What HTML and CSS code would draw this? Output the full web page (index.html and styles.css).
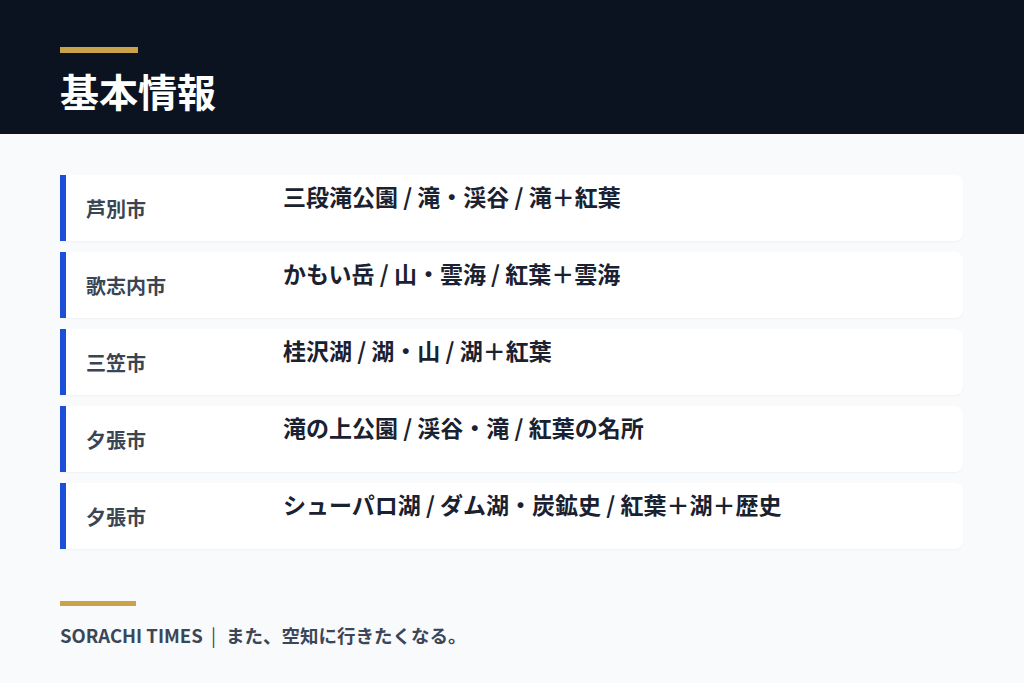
FILE: index.html
```html
<!DOCTYPE html>
<html lang="ja">
<head>
<meta charset="utf-8">
<link rel="stylesheet" href="styles.css">
</head>
<body>
<header class="hero">
  <div class="accent"></div>
  <h1 class="title">基本情報</h1>
</header>
<main class="list">
  <div class="row"><div class="city">芦別市</div><div class="spot">三段滝公園 / 滝・渓谷 / 滝＋紅葉</div></div>
  <div class="row"><div class="city">歌志内市</div><div class="spot">かもい岳 / 山・雲海 / 紅葉＋雲海</div></div>
  <div class="row"><div class="city">三笠市</div><div class="spot">桂沢湖 / 湖・山 / 湖＋紅葉</div></div>
  <div class="row"><div class="city">夕張市</div><div class="spot">滝の上公園 / 渓谷・滝 / 紅葉の名所</div></div>
  <div class="row"><div class="city">夕張市</div><div class="spot">シューパロ湖 / ダム湖・炭鉱史 / 紅葉＋湖＋歴史</div></div>
</main>
<footer class="foot">
  <div class="foot-accent"></div>
  <p class="brand">SORACHI TIMES <span class="sep">|</span> また、空知に行きたくなる。</p>
</footer>
</body>
</html>
```
FILE: styles.css
```css
html, body {
  margin: 0;
  padding: 0;
}
body {
  width: 1024px;
  height: 683px;
  overflow: hidden;
  background: #f8fafc;
  font-family: "Noto Sans CJK JP", "Noto Sans", sans-serif;
}
.hero {
  background: #0c1320;
  height: 134px;
  box-sizing: border-box;
  padding: 47px 60px 0;
}
.accent {
  width: 78px;
  height: 6px;
  background: #c9a24a;
}
.title {
  margin: 13px 0 0;
  color: #ffffff;
  font-size: 39px;
  font-weight: 700;
  line-height: 48px;
}
.list {
  padding: 41px 61px 0 60px;
  display: flex;
  flex-direction: column;
  gap: 11px;
}
.row {
  display: grid;
  grid-template-columns: 197px 1fr;
  height: 66px;
  box-sizing: border-box;
  padding: 0 20px;
  background: #ffffff;
  border-left: 6px solid #1d4ed8;
  border-radius: 0 8px 8px 0;
  box-shadow: 0 1px 2px rgba(15, 23, 42, 0.04);
}
.city {
  align-self: center;
  padding-top: 2px;
  font-size: 20px;
  font-weight: 700;
  color: #3a4553;
  line-height: 1.3;
}
.spot {
  align-self: start;
  padding-top: 7px;
  font-size: 23px;
  font-weight: 700;
  color: #1a2130;
  line-height: 1.3;
}
.foot {
  padding: 52px 60px 0;
}
.foot-accent {
  width: 76px;
  height: 5px;
  background: #c9a24a;
}
.brand {
  margin: 16px 0 0;
  font-size: 18.5px;
  font-weight: 700;
  color: #3b4656;
  line-height: 26px;
}
.sep {
  display: inline-block;
  margin: 0 6px 0 4px;
  font-weight: 400;
  color: #3b4656;
}
```
